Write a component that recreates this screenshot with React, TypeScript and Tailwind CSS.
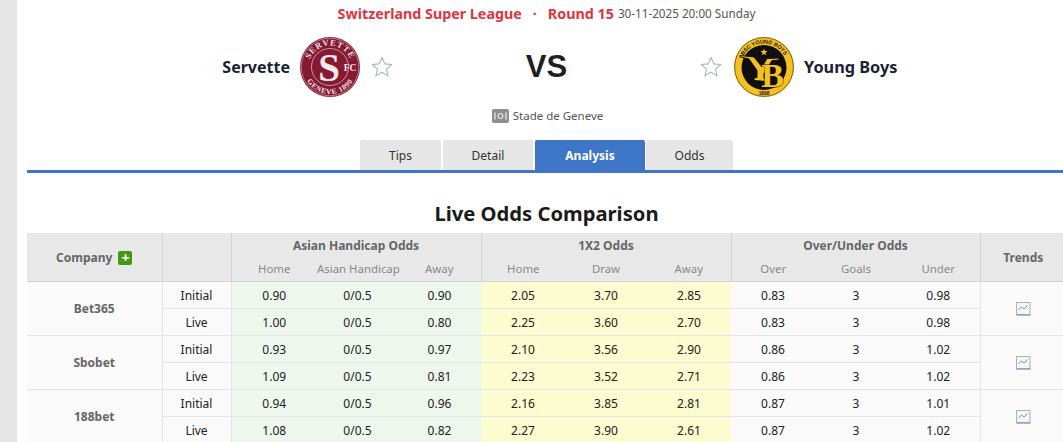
import React from 'react';

const font = { fontFamily: '"Noto Sans", Tahoma, sans-serif' };

const odds = [
  {
    name: 'Bet365',
    rows: [
      ['Initial', '0.90', '0/0.5', '0.90', '2.05', '3.70', '2.85', '0.83', '3', '0.98'],
      ['Live', '1.00', '0/0.5', '0.80', '2.25', '3.60', '2.70', '0.83', '3', '0.98'],
    ],
  },
  {
    name: 'Sbobet',
    rows: [
      ['Initial', '0.93', '0/0.5', '0.97', '2.10', '3.56', '2.90', '0.86', '3', '1.02'],
      ['Live', '1.09', '0/0.5', '0.81', '2.23', '3.52', '2.71', '0.86', '3', '1.02'],
    ],
  },
  {
    name: '188bet',
    rows: [
      ['Initial', '0.94', '0/0.5', '0.96', '2.16', '3.85', '2.81', '0.87', '3', '1.01'],
      ['Live', '1.08', '0/0.5', '0.82', '2.27', '3.90', '2.61', '0.87', '3', '1.02'],
    ],
  },
];

const StarIcon = ({ color }: { color: string }) => (
  <svg width="22" height="22" viewBox="0 0 22 22" fill="none" stroke={color} strokeWidth="1.1" strokeLinejoin="round">
    <path d="M11 1.5l2.8 6.4 6.9.6-5.2 4.6 1.6 6.8-6.1-3.6-6.1 3.6 1.6-6.8L1.3 8.500l6.900-.6z" />
  </svg>
);

const ServetteLogo = () => (
  <svg width="60" height="60" viewBox="0 0 60 60">
    <defs>
      <path id="sv-top" d="M8.500 30a21.500 21.500 0 0 1 43 0" />
      <path id="sv-bottom" d="M3 30a27 27 0 0 0 54 0" />
    </defs>
    <circle cx="30" cy="30" r="30" fill="#861a33" />
    <circle cx="30" cy="30" r="28.800" fill="none" stroke="#d9b3bc" strokeWidth="0.6" />
    <circle cx="30" cy="30" r="18.500" fill="none" stroke="#e5c9d0" strokeWidth="0.7" />
    <text fontSize="8.500" fontWeight="700" fill="#f3e4e8" fontFamily='"Liberation Serif", serif' letterSpacing="0.8">
      <textPath href="#sv-top" startOffset="50%" textAnchor="middle">SERVETTE</textPath>
    </text>
    <text fontSize="7.500" fontWeight="700" fill="#f3e4e8" fontFamily='"Liberation Serif", serif' letterSpacing="0.6">
      <textPath href="#sv-bottom" startOffset="50%" textAnchor="middle">GENEVE 1890</textPath>
    </text>
    <text x="29" y="43.500" textAnchor="middle" fontSize="39" fontWeight="700" fill="#f5e9ec" fontFamily='"Liberation Serif", serif'>S</text>
    <text x="50" y="34" textAnchor="middle" fontSize="9.500" fontWeight="700" fill="#f5e9ec" fontFamily='"Liberation Serif", serif'>FC</text>
  </svg>
);

const YoungBoysLogo = () => (
  <svg width="60" height="60" viewBox="0 0 60 60">
    <defs>
      <path id="yb-top" d="M6.500 30a23.500 23.500 0 0 1 47 0" />
    </defs>
    <circle cx="30" cy="30" r="30" fill="#f6c11e" />
    <circle cx="30" cy="30" r="29.400" fill="none" stroke="#222" strokeWidth="0.6" />
    <circle cx="30" cy="30.500" r="22.500" fill="#0f0f0f" />
    <text fontSize="5.400" fontWeight="700" fill="#111" fontFamily='"Liberation Sans", sans-serif'>
      <textPath href="#yb-top" startOffset="50%" textAnchor="middle">BSC YOUNG BOYS</textPath>
    </text>
    <path d="M30 11.500l.9 2.500 2.700.1-2.100 1.600.8 2.600-2.300-1.500-2.300 1.500.8-2.600-2.100-1.600 2.700-.1z" fill="#f6c11e" />
    {/* Y arm runs out over the ring on the left */}
    <path d="M6 18.500l14 1.500 8 10 5-8.500 12-.5v2l-7 .5-8 13v5l3 .5v2.500l-13-1v-2.500l3-.5v-7l-8-11.500-9-2z" fill="#f6c11e" stroke="#0f0f0f" strokeWidth="1" />
    <text x="38.500" y="50" textAnchor="middle" fontSize="34" fontWeight="700" fill="#f6c11e" stroke="#0f0f0f" strokeWidth="0.8" paintOrder="stroke" fontFamily='"Liberation Serif", serif'>B</text>
    <text x="30" y="57.500" textAnchor="middle" fontSize="4.800" fontWeight="700" fill="#111" fontFamily='"Liberation Sans", sans-serif'>1898</text>
  </svg>
);

const VenueIcon = () => (
  <svg width="17" height="14" viewBox="0 0 17 14">
    <rect width="17" height="14" rx="2" fill="#8e8e8e" />
    <circle cx="8.500" cy="7" r="2.500" fill="none" stroke="#fff" strokeWidth="1" />
    <path d="M3 3.500v7M14 3.500v7" stroke="#fff" strokeWidth="1" />
  </svg>
);

const TrendIcon = () => (
  <svg width="15" height="14" viewBox="0 0 15 14" fill="none" className="mx-auto">
    <rect x="0.500" y="0.500" width="13.500" height="12" fill="#f4f6f9" stroke="#aab1bb" />
    <path d="M2.500 8l3-3 2.500 2 3.500-3.500" stroke="#7d8fa8" />
    <path d="M0.500 13h14" stroke="#9aa1ab" strokeWidth="1.500" />
  </svg>
);

const tabs = [
  { label: 'Tips', width: 'w-[81px]' },
  { label: 'Detail', width: 'w-[90px]' },
  { label: 'Analysis', width: 'w-[110px]', active: true },
  { label: 'Odds', width: 'w-[87px]' },
];

export default function App() {
  return (
    <div className="flex h-[442px] w-[1063px] overflow-hidden bg-white" style={font}>
      {/* gray page gutter */}
      <div className="w-[17px] shrink-0 bg-[#e5e5e5]" />
      <div className="ml-[10px] w-[1039px] shrink-0">
        <div className="flex h-[28px] items-center justify-center text-[14.300px] font-bold text-[#e0343f]">
          <span>Switzerland Super League</span>
          <span className="mx-[11px]">·</span>
          <span>Round 15</span>
          <span className="ml-[4px] text-[11.700px] font-normal text-[#555]">30-11-2025 20:00 Sunday</span>
        </div>

        <div className="mt-[9px] flex h-[60px] items-center">
          <div className="flex w-[366px] items-center justify-end">
            <span className="mr-[10px] text-[16px] font-bold text-[#1a2233]">Servette</span>
            <ServetteLogo />
            <span className="ml-[11px]"><StarIcon color="#a9b2bd" /></span>
          </div>
          <div className="w-[307px] text-center text-[31px] font-bold text-[#1f1f1f]" style={{ fontFamily: '"Liberation Sans", sans-serif' }}>VS</div>
          <div className="flex items-center">
            <span className="mr-[12px]"><StarIcon color="#a9b2bd" /></span>
            <YoungBoysLogo />
            <span className="ml-[10px] text-[16.300px] font-bold text-[#1a2233]">Young Boys</span>
          </div>
        </div>

        <div className="mt-[11px] flex h-[16px] items-center justify-center gap-[4px] pl-[2px] text-[11.500px] text-[#555]">
          <VenueIcon />
          <span>Stade de Geneve</span>
        </div>

        <div className="mt-[16px] flex justify-center gap-[2px] border-b-[3px] border-[#3d76c6]">
          {tabs.map((t) => (
            <div
              key={t.label}
              className={`flex h-[30px] items-center justify-center rounded-t-[2px] pt-[1px] text-[12px] ${t.width} ${t.active ? '-mr-[1px] bg-[#3d76c6] font-bold text-white' : 'bg-[#e6e6e6] text-[#333]'}`}
            >
              {t.label}
            </div>
          ))}
        </div>

        <h2 className="mt-[27px] h-[33px] text-center text-[20.200px] font-bold leading-[26px] text-[#1a1a1a]">Live Odds Comparison</h2>

        <table className="w-[1039px] table-fixed border-collapse whitespace-nowrap text-center text-[12px]">
          <colgroup>
            <col className="w-[135px]" />
            <col className="w-[69px]" />
            <col className="w-[86px]" />
            <col className="w-[81px]" />
            <col className="w-[83px]" />
            <col className="w-[84px]" />
            <col className="w-[82px]" />
            <col className="w-[84px]" />
            <col className="w-[84px]" />
            <col className="w-[82px]" />
            <col className="w-[83px]" />
            <col className="w-[86px]" />
          </colgroup>
          <thead className="bg-[#e8e8e8] [&_th]:pt-[2px]">
            <tr className="h-[24px] font-bold text-[#666]">
              <th rowSpan={2} className="border-r border-b border-[#d4d4d4]">
                <span className="inline-flex items-center gap-[6px]">
                  Company
                  <span className="flex h-[14px] w-[14px] items-center justify-center rounded-[2px] bg-[#3f9b12] text-[14px] font-bold leading-none text-white">+</span>
                </span>
              </th>
              <th rowSpan={2} className="border-r border-b border-[#d4d4d4]" />
              <th colSpan={3} className="border-r border-[#d4d4d4]">Asian Handicap Odds</th>
              <th colSpan={3} className="border-r border-[#d4d4d4]">1X2 Odds</th>
              <th colSpan={3} className="border-r border-[#d4d4d4]">Over/Under Odds</th>
              <th rowSpan={2} className="border-b border-[#d4d4d4]">Trends</th>
            </tr>
            <tr className="h-[24px] border-b border-[#d4d4d4] text-[11.400px] font-normal text-[#888]">
              <td>Home</td>
              <td>Asian Handicap</td>
              <td className="border-r border-[#d4d4d4]">Away</td>
              <td>Home</td>
              <td>Draw</td>
              <td className="border-r border-[#d4d4d4]">Away</td>
              <td>Over</td>
              <td>Goals</td>
              <td className="border-r border-[#d4d4d4]">Under</td>
            </tr>
          </thead>
          <tbody className="text-[#222] [&_td]:pt-[2px]">
            {odds.map((company) =>
              company.rows.map((row, i) => (
                <tr key={company.name + row[0]} className={`h-[27px] ${i === 1 ? 'border-b border-[#e4e4e4]' : ''}`}>
                  {i === 0 && (
                    <td rowSpan={2} className="border-r border-b border-[#e4e4e4] bg-[#fafafa] font-bold text-[#666]">
                      {company.name}
                    </td>
                  )}
                  <td className="border-r border-b border-[#e4e4e4] bg-[#fafafa]">{row[0]}</td>
                  {row.slice(1, 4).map((v, j) => (
                    <td key={j} className="border-b border-[#e4e4e4] bg-[#edf7ed]">{v}</td>
                  ))}
                  {row.slice(4, 7).map((v, j) => (
                    <td key={j} className="border-b border-[#e4e4e4] bg-[#fdfbd0]">{v}</td>
                  ))}
                  {row.slice(7).map((v, j) => (
                    <td key={j} className={`border-b border-[#e4e4e4] bg-[#fafafa] ${j === 2 ? 'border-r' : ''}`}>{v}</td>
                  ))}
                  {i === 0 && (
                    <td rowSpan={2} className="border-b border-[#e4e4e4] bg-[#fafafa]">
                      <TrendIcon />
                    </td>
                  )}
                </tr>
              )),
            )}
          </tbody>
        </table>
      </div>
    </div>
  );
}
